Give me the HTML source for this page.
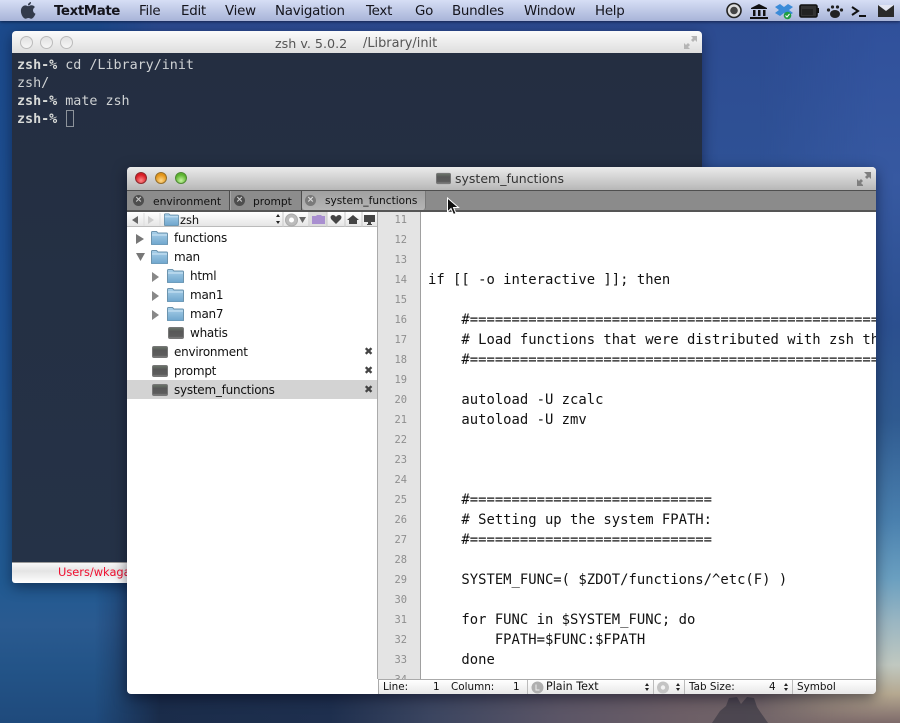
<!DOCTYPE html>
<html><head><meta charset="utf-8"><style>
*{margin:0;padding:0;box-sizing:border-box}
html,body{width:900px;height:723px;overflow:hidden;background:#1f3560}
#root{position:absolute;left:0;top:0;width:900px;height:723px;overflow:hidden}
.a{position:absolute;white-space:pre}
#bg{position:absolute;inset:0;overflow:hidden;background:linear-gradient(180deg,#2c4a90 0%,#2f5296 25%,#26497f 50%,#1e3a68 75%,#1b2c4e 90%,#1f2b47 100%)}
#bs{position:absolute;left:0;top:680px;width:900px;height:43px;background:linear-gradient(90deg,#1a2c4a 0,#1a2c4a 150px,#1e2f4e 330px,#3b4560 430px,#5b5566 560px,#6c5e66 680px,#75686a 800px,#85736e 880px,#8a7a70 900px)}
#ls{position:absolute;left:0;top:21px;width:210px;height:702px;background:linear-gradient(180deg,#1c4a8c 0%,#1d5092 40%,#215a92 80%,#2a5a90 86%,#235488 92%,#1f4a7c 100%);-webkit-mask-image:linear-gradient(90deg,#000 95px,transparent 160px);mask-image:linear-gradient(90deg,#000 95px,transparent 160px)}
#rs{position:absolute;left:760px;top:0;width:140px;height:723px;background:linear-gradient(180deg,#2f4f9a 0%,#3759a1 25%,#2b4f8f 45%,#2f5a90 58%,#4a80ae 72%,#6a9fc0 80%,#9ab6c2 86%,#c0c8c0 92%,#b5a890 96%,#7d6a6a 100%);-webkit-mask-image:linear-gradient(90deg,transparent 0,#000 116px);mask-image:linear-gradient(90deg,transparent 0,#000 116px)}
.sans{font-family:"DejaVu Sans",sans-serif}
#mb{position:absolute;left:0;top:0;width:900px;height:21px;background:linear-gradient(#d6def5,#a8b4d8);box-shadow:0 1px 3px rgba(0,0,20,.55)}
#mb span{position:absolute;top:4px;font:13.4px/16px "DejaVu Sans",sans-serif;color:#14141c;white-space:pre;letter-spacing:-.25px}
#term{position:absolute;left:12px;top:31px;width:690px;height:552px;border-radius:4px 4px 3px 3px;overflow:hidden;box-shadow:0 4px 14px rgba(0,0,20,.45)}
#tt{position:absolute;left:0;top:0;width:690px;height:22px;background:linear-gradient(#fbfbfb,#dedede)}
#tb{position:absolute;left:0;top:22px;width:690px;height:510px;background:linear-gradient(#242e41,#253247)}
#tf{position:absolute;left:0;top:531px;width:690px;height:21px;background:linear-gradient(#f7f7f7,#e4e4e4 40%,#fff);border-top:1px solid #999}
.tl{position:absolute;left:5px;font:13.4px/18px "DejaVu Sans Mono",monospace;color:#cfd2d4;white-space:pre;letter-spacing:-.02px}
.tl b{font-weight:700;color:#d8dad8}
.d{position:absolute;width:13px;height:13px;top:5px;border-radius:50%;border:1px solid #bbb;background:linear-gradient(#e2e2e2,#f6f6f6)}
#w{position:absolute;left:127px;top:167px;width:749px;height:527px;border-radius:4px;overflow:hidden;background:#fff;box-shadow:0 4px 14px rgba(0,0,20,.5)}
#wt{position:absolute;left:0;top:0;width:749px;height:24px;background:linear-gradient(#ebebeb,#b7b7b7);border-bottom:1px solid #4f4f4f}
#tabs{position:absolute;left:0;top:24px;width:749px;height:21px;background:#8b8b8b;border-bottom:2px solid #555}
.tab{position:absolute;top:0;height:19px;border-right:1px solid #4d4d4d;background:#8c8c8c}
.tab span{position:absolute;top:3px;font:10.7px/15px "DejaVu Sans",sans-serif;color:#111;white-space:pre}
.x{position:absolute;left:6px;top:4px;width:11px;height:11px;border-radius:50%;background:#4e4e4e;color:#ccc;font:bold 9px/11px "DejaVu Sans",sans-serif;text-align:center}
.r{position:absolute;left:47px;font:12px/19px "DejaVu Sans",sans-serif;color:#111;white-space:pre;letter-spacing:-.25px}
.rx{position:absolute;left:237px;font:bold 11px/19px "DejaVu Sans",sans-serif;color:#444}
#ed{position:absolute;left:301px;top:45px;width:448px;height:467px;overflow:hidden;background:#fff}
#ed pre{position:absolute;left:0;top:-2px;font:13.88px/20px "DejaVu Sans Mono",monospace;color:#111;white-space:pre}
#gut{position:absolute;left:250px;top:45px;width:44px;height:467px;background:#e4e4e4;border-left:1px solid #aaa;border-right:1px solid #a0a0a0;overflow:hidden}
#gut pre{position:absolute;right:13px;top:-2px;font:10.4px/20px "DejaVu Sans Mono",monospace;color:#8e8e8e;text-align:right;white-space:pre}
#st{position:absolute;left:251px;top:512px;width:498px;height:15px;background:linear-gradient(#fff,#e8e8e8);border-top:1px solid #aaa;border-left:1px solid #aaa}
#st span{position:absolute;top:0;font:10.4px/14px "DejaVu Sans",sans-serif;color:#111;white-space:pre}
#st u{position:absolute;top:0;width:1px;height:15px;background:#bbb}
</style></head><body><div id="root">
<div id="bg">
<div id="bs"></div>
<div id="ls"></div>
<div id="rs"></div>
</div>
<svg class="a" style="left:700px;top:690px" width="120" height="33"><path d="M12 33l8-12 6-5 3-8 8-1 4 7 6-7 7 1 3 9 4 6 7 10z" fill="#3d3a46" opacity=".7"/></svg>

<div id="term">
<div id="tt">
<div class="d" style="left:8px"></div><div class="d" style="left:28px"></div><div class="d" style="left:48px"></div>
<div class="a sans" style="left:263px;top:5px;font-size:12.7px;line-height:15px;color:#555">zsh v. 5.0.2</div>
<div class="a sans" style="left:351px;top:5px;font-size:12.9px;line-height:15px;color:#555">/Library/init</div>
<svg class="a" style="left:671px;top:4px" width="15" height="15" fill="#b5b5b5"><path d="M8 1h6v6l-2-2-2 2-2-2 2-2zM1 8l2 2 2-2 2 2-2 2 2 2H1z"/></svg>
</div>
<div id="tb"></div>
<div class="tl" style="top:24px;transform:translateY(2px)"><b>zsh-%</b> cd /Library/init</div>
<div class="tl" style="top:44px">zsh/</div>
<div class="tl" style="top:62px"><b>zsh-%</b> mate zsh</div>
<div class="tl" style="top:80px"><b>zsh-%</b></div>
<div class="a" style="left:54px;top:79px;width:8px;height:17px;border:1px solid #8d939b"></div>
<div id="tf"><div class="a sans" style="left:46px;top:2px;font-size:11.4px;line-height:15px;color:#f01030">Users/wkagawa</div></div>
</div>

<div id="mb">
<svg class="a" style="left:20px;top:1px" width="16" height="19" viewBox="0 0 16 19"><path d="M11 1c.2 1.800-1.300 3.400-3 3.400C7.800 2.700 9.400 1.200 11 1zM8 5.200c.9 0 2-.9 3.500-.9 1 0 2.500.4 3.400 1.800-2.800 1.700-2.300 5.500.6 6.600-.7 2-2.600 5-4.300 5-1 0-1.500-.7-2.800-.7s-1.900.7-2.900.7c-2 0-4.600-4-4.600-7.700 0-3.500 2.300-5.600 4.400-5.600 1.400 0 2.100.8 2.700.8z" fill="#333b4c"/></svg>
<span style="left:54px;font-weight:700;letter-spacing:-.42px">TextMate</span>
<span style="left:139px">File</span><span style="left:181px">Edit</span><span style="left:225px">View</span>
<span style="left:275px">Navigation</span><span style="left:366px">Text</span><span style="left:415px">Go</span>
<span style="left:452px">Bundles</span><span style="left:524px">Window</span><span style="left:595px">Help</span>
<svg class="a" style="left:725px;top:2px" width="175" height="18" viewBox="0 0 175 18">
<circle cx="9" cy="8.500" r="7" fill="#ddd" stroke="#222" stroke-width="1.600"/><circle cx="9" cy="8.500" r="3.800" fill="#444"/>
<path d="M26 6l8-4 8 4v1H26zM28 8h2.500v6H28zM33 8h2.500v6H33zM38 8h2.500v6H38zM25 15h18v2H25z" fill="#111"/>
<path d="M50 5l5-3 4 3 4-3 5 3-4 3 4 3-5 3-4-3-4 3-5-3 4-3z" fill="#3b8bd8"/><circle cx="62.500" cy="13.500" r="3.800" fill="#1f9e42"/><path d="M60.500 13.500l1.500 1.500 2.500-3" stroke="#fff" fill="none"/>
<rect x="75" y="3" width="17" height="12" rx="1.500" fill="#333" stroke="#111" stroke-width="1.600"/><rect x="77" y="7" width="11" height="6" fill="#222"/><rect x="92.500" y="6" width="1.500" height="5" fill="#111"/>
<ellipse cx="110" cy="12" rx="5" ry="4" fill="#222"/><circle cx="103.500" cy="8" r="1.600" fill="#222"/><circle cx="116.500" cy="8" r="1.600" fill="#222"/><circle cx="107.500" cy="5" r="1.600" fill="#222"/><circle cx="112.500" cy="5" r="1.600" fill="#222"/>
<path d="M127 5l6 4-6 4" fill="none" stroke="#111" stroke-width="2"/><path d="M134 14h7" stroke="#111" stroke-width="2"/>
<rect x="153" y="3" width="16" height="12" fill="#2a2a2a"/><path d="M153 3l8 6 8-6z" fill="#e4e7f2"/>
</svg>
</div>

<svg width="0" height="0" style="position:absolute"><defs>
<linearGradient id="fg" x1="0" y1="0" x2="0" y2="1"><stop offset="0" stop-color="#a9d0ea"/><stop offset="1" stop-color="#6ea5cc"/></linearGradient>
<linearGradient id="gg" x1="0" y1="0" x2="0" y2="1"><stop offset="0" stop-color="#6c776b"/><stop offset=".35" stop-color="#585858"/><stop offset=".8" stop-color="#5c5c5c"/><stop offset="1" stop-color="#8a8a8a"/></linearGradient>
<symbol id="fo" viewBox="0 0 17 14"><path d="M.5 3V1.500q0-1 1-1h4l1.500 1.500h8.500q1 0 1 1v10q0 1-1 1h-14q-1 0-1-1z" fill="url(#fg)" stroke="#6b93ad"/><path d="M1 4h15" stroke="#cfe6f5"/></symbol>
<symbol id="fi" viewBox="0 0 16 12"><rect x=".5" y=".5" width="15" height="11" rx="1.500" fill="url(#gg)" stroke="#777"/></symbol>
</defs></svg>

<div id="w">
<div id="wt">
<div class="a" style="left:8px;top:5px;width:12px;height:12px;border-radius:50%;background:radial-gradient(circle at 50% 75%,#ff8a8a,#d81b24 65%);border:1px solid #8d2a2e"></div>
<div class="a" style="left:28px;top:5px;width:12px;height:12px;border-radius:50%;background:radial-gradient(circle at 50% 75%,#ffd98a,#e29418 65%);border:1px solid #96702c"></div>
<div class="a" style="left:48px;top:5px;width:12px;height:12px;border-radius:50%;background:radial-gradient(circle at 50% 75%,#c5f5a0,#5cb32f 65%);border:1px solid #4f8a34"></div>
<svg class="a" style="left:309px;top:5px" width="15" height="13"><use href="#fi"/></svg>
<div class="a sans" style="left:328px;top:4px;font-size:12.5px;line-height:16px;color:#333">system_functions</div>
<svg class="a" style="left:729px;top:4px" width="16" height="16" fill="#7f7f7f"><path d="M8 1h7v7l-2-2-2 2-2-2 2-2zM1 8l2 2 2-2 2 2-2 2 2 2v1H1z"/></svg>
</div>
<div id="tabs">
<div class="tab" style="left:0;width:103px"><div class="x">×</div><span style="left:26px">environment</span></div>
<div class="tab" style="left:103px;width:72px;border-left:1px solid #a5a5a5"><div class="x" style="left:3px">×</div><span style="left:22px">prompt</span></div>
<div class="tab" style="left:175px;width:124px;background:linear-gradient(#a0a0a0,#b5b5b5);border-radius:0 0 3px 3px;height:19px;border-right:1px solid #777"><div class="x" style="left:3px;background:#7a7a7a;color:#ddd">×</div><span style="left:23px;font-size:10.6px">system_functions</span></div>
</div>

<div class="a" style="left:0;top:45px;width:251px;height:15px;background:linear-gradient(#fff,#e5e5e5);border-bottom:1px solid #bbb"></div>
<svg class="a" style="left:0;top:45px" width="251" height="15">
<path d="M5 8l6-4v8z" fill="#666"/><path d="M21 4l6 4-6 4z" fill="#ccc"/><path d="M17 1v13M33 1v13" stroke="#ddd"/>
<use href="#fo" x="37" y="1" width="15" height="13"/>
<path d="M149 5l2-3 2 3zM149 9l2 3 2-3z" fill="#222"/><path d="M156 0v15" stroke="#c8c8c8"/>
<circle cx="164.500" cy="8" r="6" fill="#bbb" stroke="#aaa"/><circle cx="164.500" cy="8" r="2.500" fill="#fff"/>
<path d="M172 5h7l-3.500 6z" fill="#666"/><path d="M182 0v15" stroke="#c8c8c8"/>
<rect x="183" y="0" width="17" height="14" fill="#dcdcdc"/><path d="M185 4h4l1-1h4l1 1h3v8h-13z" fill="#a98fd0"/><path d="M200 0v15" stroke="#c8c8c8"/>
<path d="M209 12l-5-5q-1.500-3 1.500-4 2.500 0 3.500 2 1-2 3.500-2 3 1 1.500 4z" fill="#444"/><path d="M218 0v15" stroke="#c8c8c8"/>
<path d="M226 3l6 5h-2v4h-8V8h-2z" fill="#444"/><path d="M235 0v15" stroke="#c8c8c8"/>
<rect x="237" y="3" width="11" height="7" fill="#444"/><path d="M240 12h5v1h-5zM241 10h3v2h-3z" fill="#444"/>
</svg>
<div class="a sans" style="left:53px;top:46px;font-size:11.4px;line-height:14px;color:#111">zsh</div>

<div class="a" style="left:0;top:213px;width:251px;height:19px;background:#d3d3d3"></div>
<svg class="a" style="left:0;top:60px" width="90" height="180">
<path d="M9 7l8 5-8 5z" fill="#777"/><path d="M9 26h9l-4.500 8z" fill="#777"/>
<path d="M25 45l7 5-7 5zM25 64l7 5-7 5zM25 83l7 5-7 5z" fill="#888"/>
<use href="#fo" x="24" y="4" width="17" height="14"/><use href="#fo" x="24" y="23" width="17" height="14"/>
<use href="#fo" x="40" y="42" width="17" height="14"/><use href="#fo" x="40" y="61" width="17" height="14"/><use href="#fo" x="40" y="80" width="17" height="14"/>
<use href="#fi" x="41" y="100" width="16" height="12"/><use href="#fi" x="25" y="119" width="16" height="12"/><use href="#fi" x="25" y="138" width="16" height="12"/><use href="#fi" x="25" y="157" width="16" height="12"/>
</svg>
<div class="r" style="top:62px">functions</div>
<div class="r" style="top:81px">man</div>
<div class="r" style="top:100px;left:63px">html</div>
<div class="r" style="top:119px;left:63px">man1</div>
<div class="r" style="top:138px;left:63px">man7</div>
<div class="r" style="top:157px;left:63px">whatis</div>
<div class="r" style="top:176px">environment</div><div class="rx" style="top:175px">✖</div>
<div class="r" style="top:195px">prompt</div><div class="rx" style="top:194px">✖</div>
<div class="r" style="top:214px">system_functions</div><div class="rx" style="top:213px">✖</div>

<div id="gut"><pre>11
12
13
14
15
16
17
18
19
20
21
22
23
24
25
26
27
28
29
30
31
32
33
34</pre></div>
<div id="ed"><pre>



if [[ -o interactive ]]; then

    #==================================================================
    # Load functions that were distributed with zsh that
    #==================================================================

    autoload -U zcalc
    autoload -U zmv



    #=============================
    # Setting up the system FPATH:
    #=============================

    SYSTEM_FUNC=( $ZDOT/functions/^etc(F) )

    for FUNC in $SYSTEM_FUNC; do
        FPATH=$FUNC:$FPATH
    done</pre></div>

<div id="st">
<span style="left:4px">Line:</span><span style="left:54px">1</span><span style="left:72px">Column:</span><span style="left:134px">1</span>
<u style="left:148px"></u>
<svg class="a" style="left:152px;top:1px" width="13" height="13"><circle cx="6.500" cy="6.500" r="6" fill="#b0b0b0"/><path d="M5 3.500V9h3.500" stroke="#eee" fill="none"/></svg>
<span style="left:167px;font-size:11.1px">Plain Text</span>
<svg class="a" style="left:264px;top:0" width="8" height="14"><path d="M2 6l2-3 2 3zM2 8l2 3 2-3z" fill="#222"/></svg>
<u style="left:274px"></u>
<svg class="a" style="left:275px;top:1px" width="25" height="13"><circle cx="9" cy="6.500" r="6" fill="#c4c4c4"/><circle cx="9" cy="6.500" r="2.200" fill="#f2f2f2"/></svg>
<svg class="a" style="left:295px;top:0" width="8" height="14"><path d="M2 6l2-3 2 3zM2 8l2 3 2-3z" fill="#222"/></svg>
<u style="left:305px"></u>
<span style="left:310px">Tab Size:</span><span style="left:390px">4</span>
<svg class="a" style="left:403px;top:0" width="8" height="14"><path d="M2 6l2-3 2 3zM2 8l2 3 2-3z" fill="#222"/></svg>
<u style="left:413px"></u>
<span style="left:418px">Symbol</span>
</div>
</div>

<svg class="a" style="left:446px;top:197px" width="14" height="20"><path d="M1.500 1v14l3.500-3.500 2.500 6 2.500-1-2.500-6h5z" fill="#111" stroke="#fff" stroke-width="1"/></svg>
</div></body></html>
